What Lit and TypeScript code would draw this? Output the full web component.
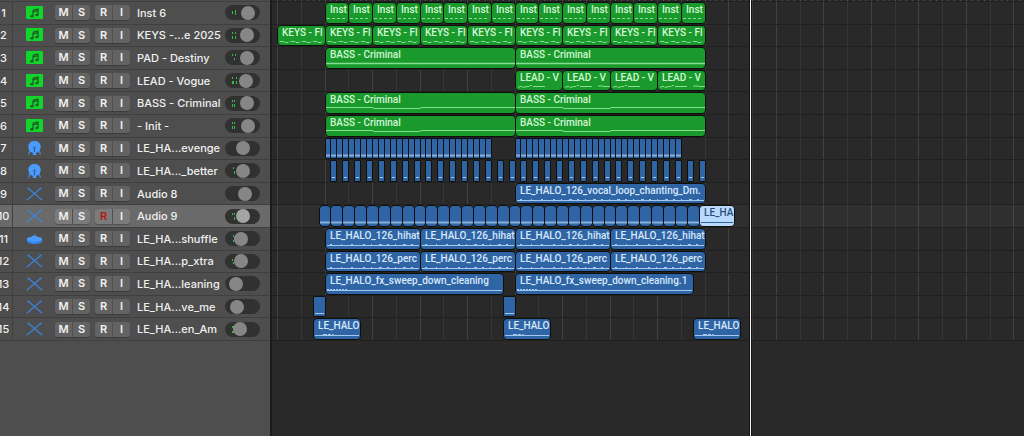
import { LitElement, html, svg, css } from "lit";
import { customElement, property } from "lit/decorators.js";

type IconKind = "midi" | "kick" | "sticks" | "cymbal";
type Shape = "dashes" | "wave" | "flat" | "bass" | "lead" | "line" | "noise" | "fade" | "burst" | "blip";

interface Region {
  start: number;
  length: number;
  label?: string;
  shape: Shape;
  kind?: string;
}

interface Track {
  name: string;
  icon: IconKind;
  volume: number;
  meter: number[][];
  selected?: boolean;
  color: "green" | "blue";
  regions: Region[];
}

/* Four bars are 95 pixels wide; bar 0 starts 5 pixels into the arrange area. */
const barX = (bar: number) => 5 + Math.round((bar * 95) / 4);

const series = (count: number, start: number, step: number, length: number, shape: Shape, label = "", kind = ""): Region[] =>
  Array.from({ length: count }, (_, i) => ({ start: start + i * step, length, shape, label, kind }));

const TRACKS: Track[] = [
  { name: "Inst 6", icon: "midi", volume: 16, meter: [[1, 6, 3], [4, 5, 5]], color: "green", regions: series(16, 2, 1, 1, "dashes", "Inst") },
  { name: "KEYS -...e 2025", icon: "midi", volume: 15, meter: [[1, 4, 2], [1, 8, 3], [4, 4, 2], [4, 8, 3]], color: "green", regions: series(9, 0, 2, 2, "wave", "KEYS - Fl") },
  { name: "PAD - Destiny", icon: "midi", volume: 15, meter: [[1, 4, 2], [4, 4, 2], [3, 8, 2]], color: "green", regions: series(2, 2, 8, 8, "flat", "BASS - Criminal") },
  { name: "LEAD - Vogue", icon: "midi", volume: 14, meter: [[1, 4, 2], [1, 8, 3], [2, 8, 3], [5, 4, 2], [5, 8, 3]], color: "green", regions: series(4, 10, 2, 2, "lead", "LEAD - V") },
  { name: "BASS - Criminal", icon: "midi", volume: 15, meter: [[1, 4, 2], [1, 8, 3], [3, 4, 2], [3, 8, 3]], color: "green", regions: series(2, 2, 8, 8, "bass", "BASS - Criminal") },
  { name: "- Init -", icon: "midi", volume: 16, meter: [[1, 4, 2], [1, 8, 3], [3, 4, 2], [3, 8, 3]], color: "green", regions: series(2, 2, 8, 8, "bass", "BASS - Criminal") },
  { name: "LE_HA...evenge", icon: "kick", volume: 11, meter: [], color: "blue", regions: [...series(28, 2, 0.25, 0.25, "blip", "", "slice"), ...series(28, 10, 0.25, 0.25, "blip", "", "slice")] },
  { name: "LE_HA..._better", icon: "kick", volume: 11, meter: [[2, 4, 2], [3, 8, 3]], color: "blue", regions: series(32, 2.25, 0.5, 0.25, "line", "", "slice") },
  { name: "Audio 8", icon: "sticks", volume: 13, meter: [], color: "blue", regions: [{ start: 10, length: 8, shape: "noise", label: "LE_HALO_126_vocal_loop_chanting_Dm." }] },
  { name: "Audio 9", icon: "sticks", volume: 11, meter: [[1, 4, 2], [3, 4, 2], [3, 8, 3]], selected: true, color: "blue", regions: [...series(32, 1.75, 0.5, 0.5, "blip"), { start: 17.75, length: 1.5, shape: "line", label: "LE_HA", kind: "picked" }] },
  { name: "LE_HA...shuffle", icon: "cymbal", volume: 9, meter: [[2, 4, 2], [3, 6, 3], [2, 9, 2]], color: "blue", regions: series(4, 2, 4, 4, "noise", "LE_HALO_126_hihat") },
  { name: "LE_HA...p_xtra", icon: "sticks", volume: 9, meter: [[1, 5, 2], [2, 8, 2]], color: "blue", regions: series(4, 2, 4, 4, "noise", "LE_HALO_126_perc") },
  { name: "LE_HA...leaning", icon: "sticks", volume: 4, meter: [], color: "blue", regions: [{ start: 2, length: 7.5, shape: "fade", label: "LE_HALO_fx_sweep_down_cleaning" }, { start: 10, length: 7.5, shape: "fade", label: "LE_HALO_fx_sweep_down_cleaning.1" }] },
  { name: "LE_HA...ve_me", icon: "sticks", volume: 5, meter: [], color: "blue", regions: series(2, 1.5, 8, 0.5, "line", "", "slice") },
  { name: "LE_HA...en_Am", icon: "sticks", volume: 8, meter: [[1, 4, 2], [2, 4, 2], [2, 6, 2], [1, 9, 2], [2, 9, 2]], color: "blue", regions: series(3, 1.5, 8, 2, "burst", "LE_HALO") },
];

const ICONS = {
  midi: svg`
    <rect x="1" y="3" width="17" height="13" rx="1" fill="#12d52c"/>
    <path d="M8 7.2 13 6v6M8 7.2v6M8 8.8l5-1.2" fill="none" stroke="#1d5a26" stroke-width="1.2"/>
    <ellipse cx="6.9" cy="13.2" rx="1.6" ry="1.2" fill="#1d5a26"/>
    <ellipse cx="11.9" cy="12" rx="1.6" ry="1.2" fill="#1d5a26"/>`,
  kick: svg`
    <path d="M5.5 11.5 3.5 16.5M13.5 11.5l2 5" stroke="#3f8fee" stroke-width="1.2"/>
    <circle cx="9.5" cy="9" r="6.2" fill="#4b9bfb"/>
    <path d="M9.5 10v4.5" stroke="#2c5f9f" stroke-width="1.2"/>
    <circle cx="9.5" cy="9.8" r="1.2" fill="#2f69b2"/>
    <path d="M7.5 17l1-2.5h2l1 2.5z" fill="#4b9bfb"/>`,
  sticks: svg`
    <path d="M3.5 4.5 17 16M15.5 4.5 2 16" stroke="#3d84d8" stroke-width="1.1" stroke-linecap="round"/>
    <circle cx="3.4" cy="4.4" r="1" fill="#3d84d8"/><circle cx="15.6" cy="4.4" r="1" fill="#3d84d8"/>`,
  cymbal: svg`
    <path d="M2 10v2c0 4 15 4 15 0v-2z" fill="#3587ec"/>
    <ellipse cx="9.5" cy="10" rx="7.7" ry="2.6" fill="#4b9bfb"/>
    <path d="M7 8c0-1.6 1.2-1 2-1.2V5.5h1v1.3c.8.2 2-.4 2 1.2z" fill="#4b9bfb"/>`,
};

@customElement("track-header")
class TrackHeader extends LitElement {
  @property({ attribute: false }) track!: Track;
  @property({ type: Number }) number = 1;

  static styles = css`
    :host { display: block; min-height: 0; border-top: 1px solid #3f3f3f; box-sizing: border-box; background: #4e4e4e; color: #f0f0f0; }
    .row { display: flex; align-items: center; height: 100%; font-size: 11px; font-weight: 500; }
    .row.selected { background: #6a6a6a; }
    .number { width: 7px; margin-right: 5px; display: flex; justify-content: center; flex: none; }
    .icon { width: 43px; align-self: stretch; border-left: 1px solid #414141; box-sizing: border-box; padding-left: 12px; flex: none; display: flex; align-items: center; }
    .icon svg { width: 19px; height: 20px; display: block; flex: none; }
    .pair { display: flex; gap: 1px; margin-right: 5px; border-radius: 3px; box-shadow: 0 1px 1px #00000040; background: #505050; }
    button { width: 17px; height: 15px; padding: 0; border: 0; background: #636363; color: #f2f2f2; font: 600 11px/15px Inter, "Liberation Sans", sans-serif; text-align: center; }
    button:first-child { border-radius: 3px 0 0 3px; }
    button:last-child { border-radius: 0 3px 3px 0; }
    .selected button { background: #7b7b7b; }
    .selected .armed { color: #b01712; }
    .name { flex: 1; min-width: 0; margin-left: 2px; white-space: nowrap; }
    .volume { display: grid; width: 35px; height: 15px; margin-right: 10px; border-radius: 8px; background: #313131; flex: none; }
    .volume > * { grid-area: 1 / 1; }
    .volume svg { width: 35px; height: 15px; }
    input { appearance: none; -webkit-appearance: none; width: 35px; height: 15px; margin: 0; background: none; z-index: 1; }
    input::-webkit-slider-thumb { -webkit-appearance: none; width: 14px; height: 14px; border-radius: 50%; background: #868686; }
    .selected input::-webkit-slider-thumb { background: #a4a4a4; }
  `;

  render() {
    const t = this.track;
    return html`<div class="row ${t.selected ? "selected" : ""}">
      <span class="number">${this.number}</span>
      <span class="icon"><svg viewBox="0 0 19 20" aria-hidden="true">${ICONS[t.icon]}</svg></span>
      <div class="pair"><button aria-label="Mute">M</button><button aria-label="Solo">S</button></div>
      <div class="pair"><button class="armed" aria-label="Record enable">R</button><button aria-label="Input monitoring">I</button></div>
      <span class="name">${t.name}</span>
      <div class="volume">
        <svg viewBox="0 0 35 15" aria-hidden="true">${t.meter.map(([x, y, h]) => svg`<rect x=${x + 6} y=${y} width="1" height=${h} fill="#2fbf45"/>`)}</svg>
        <input type="range" min="0" max="21" .value=${String(t.volume)} aria-label="Volume of ${t.name}" />
      </div>
    </div>`;
  }
}

/* Small overview of the notes or audio, drawn along the bottom of a region. */
function contents(shape: Shape, w: number, start: number) {
  const parts: string[] = [];
  switch (shape) {
    case "dashes":
      for (let x = 1; x < w - 2; x += 5) parts.push(`M${x} 15.5h3`);
      break;
    case "wave":
      for (let x = 2; x < w - 4; x += 11) parts.push(`M${x} 15.5h4l1 1h3l1-1`);
      break;
    case "flat":
      return svg`<path d="M0 15.5H${w}" stroke-width="1.5"/>`;
    case "bass":
      parts.push(`M0 14.5H${w / 4}M${w / 4} 15.5H${w / 2}M${w / 2} 14.5H${w}`);
      break;
    case "lead":
      parts.push(`M2 16.5l2-1h2l1 1 4-1h2l1-1h2M17 15.5h12`);
      if (start % 4 === 0) parts.push(`M35 15h5l1 .5h6`);
      break;
    case "blip":
      return svg`<path d="M0 16.5H${w}" stroke-width="2" opacity=".75"/>`;
    case "noise":
      parts.push(`M1 16.5H${w - 1}`);
      for (let x = 4; x < w - 4; x += 7 + ((x * 5) % 8)) parts.push(`M${x} 15.5h${1 + (x % 3)}`);
      break;
    case "fade":
      parts.push(`M1 16.5H${w - 1}`);
      for (let x = 1; x < 20; x += 3) parts.push(`M${x} 15.5h2`);
      break;
    case "burst":
      parts.push(`M1 16.5H${w - 1}M9 15.5h4M14 15.5h3M18 15.5l3 1`);
      break;
    default:
      parts.push(`M1 16.5H${w - 1}`);
  }
  return svg`<path d=${parts.join("")}/>`;
}

@customElement("track-lane")
class TrackLane extends LitElement {
  @property({ attribute: false }) track!: Track;

  static styles = css`
    :host { display: block; position: relative; min-height: 0; border-top: 1px solid #202020; box-sizing: border-box; }
    .lane { position: absolute; inset: 0; }
    .lane.selected { background: #ffffff08; }
    .region { position: absolute; top: 0; bottom: 0; box-sizing: border-box; overflow: hidden; border: 1px solid #0d0f0d; border-radius: 4px; font-family: Roboto, "Liberation Sans", sans-serif; font-size: 10px; font-weight: 500; line-height: 14px; white-space: nowrap; }
    .region.slice { border-radius: 1px; }
    .label { display: block; padding-left: 4px; }
    .green { background: #1a992c; color: #d3f8d6; }
    .blue { background: #2f65a5; color: #d8e8fb; }
    .picked { background: #b9dafe; color: #2b4d7c; }
    .region svg { position: absolute; left: 0; top: 0; height: 20px; width: 100%; fill: none; stroke: #86df90; stroke-width: 1; }
    .blue svg { stroke: #a5c8f0; }
    .picked svg { stroke: #2f65a5; }
  `;

  render() {
    const t = this.track;
    return html`<div class="lane ${t.selected ? "selected" : ""}">
      ${t.regions.map((r) => {
        const left = barX(r.start);
        const width = barX(r.start + r.length) - left + 1;
        return html`<div class="region ${t.color} ${r.kind ?? ""}" style="left:${left}px;width:${width}px">
          <span class="label">${r.label ?? ""}</span><svg aria-hidden="true">${contents(r.shape, width - 2, r.start)}</svg>
        </div>`;
      })}
    </div>`;
  }
}

@customElement("app-root")
class AppRoot extends LitElement {
  static styles = css`
    :host { display: block; min-height: 100vh; font-family: Inter, "Liberation Sans", sans-serif; background: #292929; }
    .window { display: grid; grid-template-columns: 270px minmax(0, 1fr); min-height: 100vh; }
    .headers { background: #4e4e4e; padding-top: 1px; }
    .rows { display: grid; grid-template-rows: repeat(15, minmax(0, 1fr)); height: 339px; position: relative; }
    .headers .rows { border-bottom: 1px solid #3f3f3f; }
    .arrange { position: relative; overflow: hidden; padding-top: 1px; background: #292929; border-left: 2px solid #1c1c1c; box-sizing: border-box; }
    .arrange .rows { border-bottom: 1px solid #202020; }
    .ticks, .grid { position: absolute; left: 0; top: 0; width: 100%; }
    .ticks { height: 1px; }
    .grid { height: 339px; }
    .playhead { position: absolute; top: 0; bottom: 0; left: 477px; width: 1px; background: #f4f4f4; border: solid #151515; border-width: 0 1px; }
  `;

  render() {
    const bars = Array.from({ length: 120 }, (_, i) => i);
    const lineColor = (bar: number) => ((bar < 18) === (bar % 2 === 0) ? "#424242" : "#363636");
    return html`<main class="window">
      <section class="headers" aria-label="Track headers">
        <div class="rows">${TRACKS.map((t, i) => html`<track-header .track=${t} .number=${i + 1}></track-header>`)}</div>
      </section>
      <section class="arrange" aria-label="Arrange area">
        <svg class="ticks" aria-hidden="true">${bars.flatMap((b) => [0, 1, 2, 3].map((q) => svg`<rect x=${barX(b + q / 4)} width="1" height="1" fill="#555"/>`))}</svg>
        <div class="rows">
          <svg class="grid" aria-hidden="true">${bars.map((b) => svg`<rect x=${barX(b)} width="1" height="339" fill=${lineColor(b)}/>`)}</svg>
          ${TRACKS.map((t) => html`<track-lane .track=${t}></track-lane>`)}
        </div>
        <div class="playhead"></div>
      </section>
    </main>`;
  }
}
